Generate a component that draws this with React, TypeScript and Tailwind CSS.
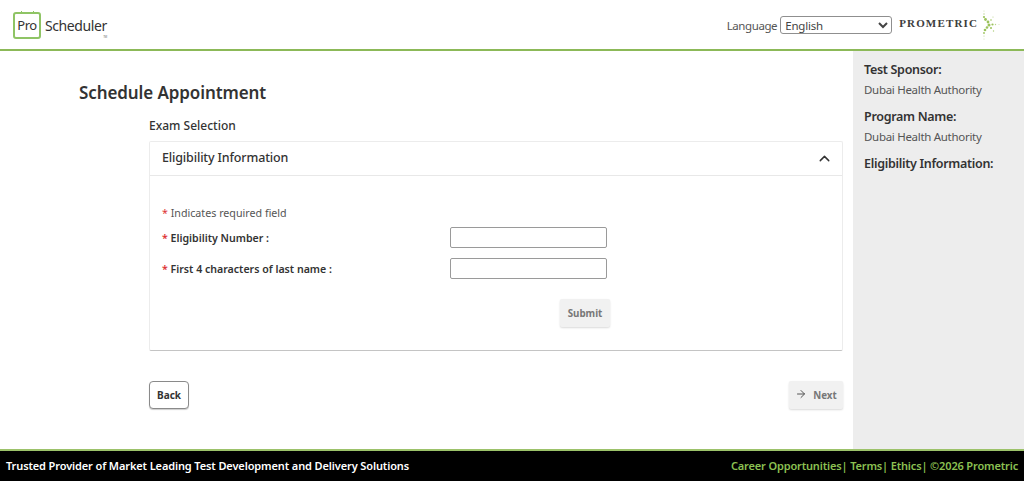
import { ArrowRight, ChevronUp } from "lucide-react";

const PrometricMark = () => (
  <svg width="20" height="32" viewBox="0 0 20 32" className="ml-[3px]">
    <g fill="#9bc25b">
      <circle cx="3" cy="2" r="0.6" opacity="0.5" />
      <circle cx="3" cy="5" r="0.7" opacity="0.7" />
      <circle cx="3" cy="8" r="1.1" />
      <circle cx="4.5" cy="10.5" r="1.4" />
      <circle cx="7" cy="13" r="1.4" />
      <circle cx="8" cy="16" r="1.5" />
      <circle cx="11.5" cy="15.5" r="1.1" />
      <circle cx="14.5" cy="15.5" r="0.7" opacity="0.7" />
      <circle cx="18" cy="15.5" r="0.5" opacity="0.5" />
      <circle cx="10" cy="11" r="0.8" />
      <circle cx="12" cy="8" r="0.6" opacity="0.7" />
      <circle cx="6" cy="18.5" r="1.3" />
      <circle cx="4" cy="21" r="1.3" />
      <circle cx="3" cy="24" r="0.9" />
      <circle cx="3" cy="27" r="0.6" opacity="0.7" />
      <circle cx="3" cy="30" r="0.5" opacity="0.5" />
      <circle cx="10" cy="19" r="1" />
      <circle cx="12.5" cy="22" r="0.7" opacity="0.8" />
    </g>
  </svg>
);

const Header = () => (
  <header className="flex h-[51px] items-center justify-between border-b-2 border-[#8cb958] bg-white">
    <div className="ml-[13px] mt-[2px] flex items-center">
      <div className="relative flex h-[27px] w-[28px] items-center justify-center rounded-[3px] border-2 border-[#8fc465] text-[13px] tracking-[-0.5px] text-[#333]">
        Pro
        <span className="absolute -top-[3px] left-[6px] h-[3px] w-[1px] bg-[#8fc465]" />
        <span className="absolute -top-[3px] left-[18px] h-[3px] w-[1px] bg-[#8fc465]" />
      </div>
      <div className="relative ml-[4px] text-[14px] tracking-[-0.4px] text-[#333]">
        Scheduler
        <span className="absolute -bottom-[3px] right-0 text-[3px] leading-none text-[#777]">TM</span>
      </div>
    </div>
    <div className="mr-[23px] flex items-center">
      <span className="mr-[3px] mt-[2px] text-[11.5px] tracking-[-0.4px] text-[#555]">Language</span>
      <select className="h-[18px] w-[112px] rounded-[3px] border border-[#8f8f8f] bg-white pl-0 text-[11.5px] tracking-[-0.2px] text-[#444]" defaultValue="English">
        <option>English</option>
      </select>
      <span className="mb-[2px] ml-[7px] font-['Liberation_Serif',serif] text-[11px] font-bold tracking-[1.15px] text-[#3d3d3d]">PROMETRIC</span>
      <PrometricMark />
    </div>
  </header>
);

const Sidebar = () => (
  <aside className="w-[171px] shrink-0 bg-[#ededed] pl-[11px] pt-[10px]">
    <h3 className="text-[12.5px] font-semibold leading-[18px] tracking-[-0.3px] text-[#333]">Test Sponsor:</h3>
    <p className="mt-[2px] text-[11.5px] leading-[18px] tracking-[-0.3px] text-[#555]">Dubai Health Authority</p>
    <h3 className="mt-[9px] text-[12.5px] font-semibold leading-[18px] tracking-[-0.3px] text-[#333]">Program Name:</h3>
    <p className="mt-[2px] text-[11.5px] leading-[18px] tracking-[-0.3px] text-[#555]">Dubai Health Authority</p>
    <h3 className="mt-[9px] text-[12.5px] font-semibold leading-[18px] tracking-[-0.3px] text-[#333]">Eligibility Information:</h3>
  </aside>
);

const Field = ({ label }: { label: string }) => (
  <div className="flex items-center">
    <label className="w-[288px] pt-[2px] text-[10.6px] font-semibold text-[#333]">
      <span className="text-[#d33]">*</span> {label}
    </label>
    <input className="h-[21px] w-[157px] rounded-[2px] border border-[#9a9a9a] bg-white" />
  </div>
);

export default function App() {
  return (
    <div className="flex h-[481px] w-[1024px] flex-col overflow-hidden bg-white font-['Noto_Sans',sans-serif]">
      <Header />
      <div className="flex h-[398px]">
        <main className="flex-1 pr-[10px]">
          <h1 className="ml-[79px] mt-[29px] text-[17px] font-semibold leading-[25px] tracking-[-0.1px] text-[#333]">Schedule Appointment</h1>
          <div className="ml-[149px]">
            <h2 className="mt-[12px] text-[12px] font-medium leading-[18px] text-[#333]">Exam Selection</h2>
            <section className="mt-[6px] h-[210px] rounded-[2px] border border-[#ececec] border-b-[#c4c4c4] bg-white">
              <div className="flex h-[34px] items-center justify-between border-b border-[#e8e8e8] pl-[12px] pr-[9px]">
                <span className="text-[12.5px] font-medium tracking-[-0.15px] text-[#333]">Eligibility Information</span>
                <ChevronUp size={17} strokeWidth={2} className="text-[#333]" />
              </div>
              <div className="pl-[12px] pt-[29px]">
                <p className="text-[10.7px] leading-[16px] text-[#555]">
                  <span className="text-[#d33]">*</span> Indicates required field
                </p>
                <div className="mt-[6px] flex flex-col gap-[10px]">
                  <Field label="Eligibility Number :" />
                  <Field label="First 4 characters of last name :" />
                </div>
                <div className="ml-[398px] mt-[20px] flex h-[28px] w-[50px] items-center justify-center rounded-[2px] bg-[#f1f1f1] pt-[2px] text-[9.8px] font-bold text-[#777] shadow-[0_1px_2px_rgba(0,0,0,0.15)]">
                  Submit
                </div>
              </div>
            </section>
            <div className="mt-[30px] flex items-center justify-between">
              <button className="h-[28px] w-[40px] rounded-[4px] border border-[#8a8a8a] bg-white text-[10px] font-bold text-[#333] shadow-[0_1px_1px_rgba(0,0,0,0.2)]">
                Back
              </button>
              <button className="flex h-[28px] w-[54px] items-center justify-center gap-[6px] rounded-[2px] bg-[#f1f1f1] pt-[2px] text-[9.8px] font-bold text-[#777] shadow-[0_1px_2px_rgba(0,0,0,0.15)]">
                <ArrowRight size={12} strokeWidth={2} className="-mt-[4px] text-[#555]" />
                Next
              </button>
            </div>
          </div>
        </main>
        <Sidebar />
      </div>
      <footer className="flex h-[32px] items-center justify-between border-t-2 border-[#9cc26a] bg-black pl-[6px] pr-[6px]">
        <span className="text-[11px] font-semibold tracking-[-0.12px] text-white">Trusted Provider of Market Leading Test Development and Delivery Solutions</span>
        <span className="text-[11px] font-semibold tracking-[-0.15px] text-[#8cc152]">Career Opportunities| Terms| Ethics| ©2026 Prometric</span>
      </footer>
    </div>
  );
}
